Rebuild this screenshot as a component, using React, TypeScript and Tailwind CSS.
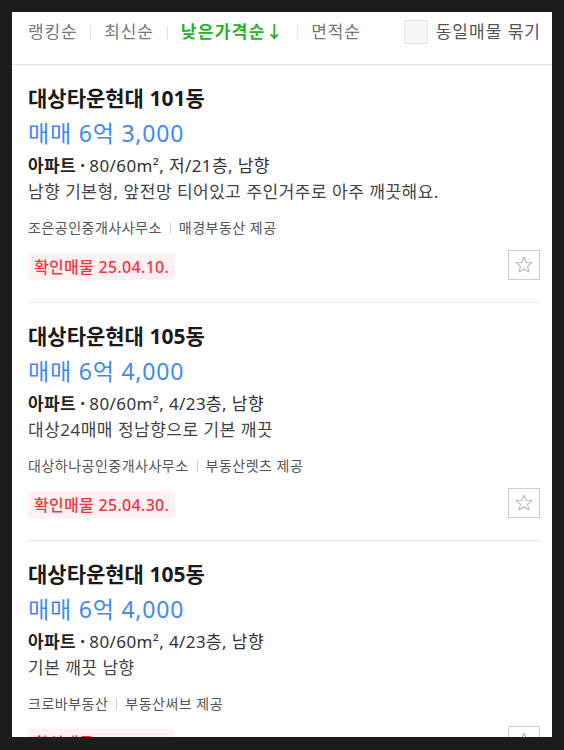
import React from "react";

type Item = {
  title: string;
  price: string;
  info: string;
  desc: string;
  agent: string;
  provider: string;
  date: string;
};

const items: Item[] = [
  {
    title: "대상타운현대 101동",
    price: "매매 6억 3,000",
    info: "80/60m², 저/21층, 남향",
    desc: "남향 기본형, 앞전망 티어있고 주인거주로 아주 깨끗해요.",
    agent: "조은공인중개사사무소",
    provider: "매경부동산 제공",
    date: "확인매물 25.04.10.",
  },
  {
    title: "대상타운현대 105동",
    price: "매매 6억 4,000",
    info: "80/60m², 4/23층, 남향",
    desc: "대상24매매 정남향으로 기본 깨끗",
    agent: "대상하나공인중개사사무소",
    provider: "부동산렛츠 제공",
    date: "확인매물 25.04.30.",
  },
  {
    title: "대상타운현대 105동",
    price: "매매 6억 4,000",
    info: "80/60m², 4/23층, 남향",
    desc: "기본 깨끗 남향",
    agent: "크로바부동산",
    provider: "부동산써브 제공",
    date: "확인매물 25.04.30.",
  },
];

function Star() {
  return (
    <svg width="20" height="20" viewBox="0 0 24 24" fill="none">
      <polygon
        points="12,2.8 14.7,9 21.3,9.4 16.2,13.7 17.8,20.3 12,16.7 6.2,20.3 7.8,13.7 2.7,9.4 9.3,9"
        stroke="#b8b8b8"
        strokeWidth="1.3"
        strokeLinejoin="round"
      />
    </svg>
  );
}

function Sep() {
  return <span className="mx-[13px] inline-block h-[13px] w-px bg-[#e2e2e2]" />;
}

function Listing({ item }: { item: Item }) {
  return (
    <div className="ml-4 mr-3 border-b border-[#e8e8e8] pt-[20px] pb-[22px]">
      <div className="text-[21px] leading-[26px] font-bold text-[#1a1a1a]">
        {item.title}
      </div>
      <div className="mt-[7px] text-[23px] leading-[30px] text-[#3d8af7] tracking-[0.8px]">
        {item.price}
      </div>
      <div className="mt-[7px] text-[17px] leading-[22px] text-[#333] tracking-[0.4px]">
        <span className="font-bold text-[#222]">아파트</span>
        <span className="mx-[4px] font-bold">·</span>
        {item.info}
      </div>
      <div className="mt-[4px] text-[17px] leading-[22px] text-[#444] tracking-[0.5px]">
        {item.desc}
      </div>
      <div className="mt-[15px] flex items-center text-[14px] leading-[20px] text-[#555] tracking-[0.5px]">
        <span>{item.agent}</span>
        <span className="mx-[8px] inline-block h-[12px] w-px bg-[#d5d5d5]" />
        <span>{item.provider}</span>
      </div>
      <div className="mt-[12px] flex h-[30px] items-end justify-between">
        <span className="flex h-[27px] items-center rounded-[4px] bg-[#fff0f1] px-[6px] text-[16px] font-medium text-[#f5333f] tracking-[0.3px]">
          {item.date}
        </span>
        <span className="flex h-[30px] w-[32px] items-center justify-center border border-[#cfcfcf] bg-white">
          <Star />
        </span>
      </div>
    </div>
  );
}

export default function App() {
  return (
    <div className="h-[750px] w-[564px] overflow-hidden bg-[#1c1c1c] pl-3 pt-3 font-['Noto_Sans','Noto_Sans_CJK_KR',sans-serif]">
      <div className="h-[725px] w-[540px] overflow-hidden bg-white">
        <div className="flex h-[53px] items-start justify-between border-b border-[#e5e5e5] pl-4 pr-[11px] pt-[8px]">
          <div className="flex h-[24px] items-center text-[17px] leading-[24px] text-[#777] tracking-[0.8px]">
            <span>랭킹순</span>
            <Sep />
            <span>최신순</span>
            <Sep />
            <span className="font-bold text-[#22b422] tracking-[1.4px]">낮은가격순↓</span>
            <Sep />
            <span>면적순</span>
          </div>
          <div className="flex h-[24px] items-center text-[17px] leading-[24px] text-[#555] tracking-[1px]">
            <span className="mr-[8px] inline-block h-[24px] w-[24px] rounded-[2px] border border-[#e3e3e3] bg-[#f6f6f6]" />
            <span>동일매물 묶기</span>
          </div>
        </div>
        {items.map((it, i) => (
          <Listing key={i} item={it} />
        ))}
      </div>
    </div>
  );
}
